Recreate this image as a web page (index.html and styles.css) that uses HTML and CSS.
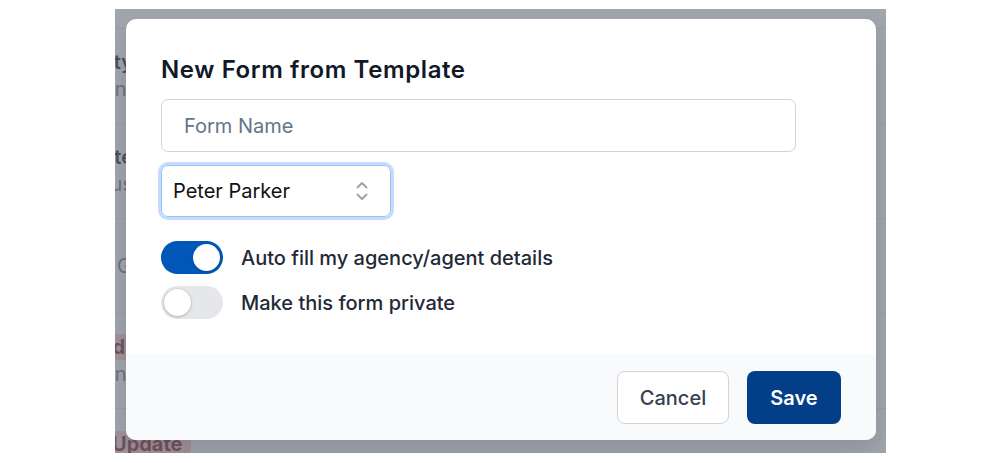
FILE: index.html
```html
<!DOCTYPE html>
<html lang="en">
<head>
<meta charset="utf-8">
<title>New Form from Template</title>
<link rel="stylesheet" href="styles.css">
</head>
<body>
<div class="screen">
  <div class="bg-table">
    <div class="bg-head"></div>
    <div class="bg-row">
      <div class="cell-r"><div class="t-strong">Property</div><div class="t-muted">Agent</div></div>
    </div>
    <div class="bg-row">
      <div class="cell-r"><div class="t-strong">Estate</div><div class="t-muted">Status</div></div>
    </div>
    <div class="bg-row">
      <div class="cell-l"><div class="t-muted">General</div></div>
    </div>
    <div class="bg-row">
      <div class="cell-r"><div><span class="badge">Expired</span></div><div class="t-muted">Agent</div></div>
    </div>
    <div class="bg-row bg-row-last">
      <div class="cell-b"><span class="badge">Update</span></div>
    </div>
  </div>
  <div class="overlay"></div>
  <div class="modal">
    <div class="modal-body">
      <h2 class="title">New Form from Template</h2>
      <div class="input"><span class="placeholder">Form Name</span></div>
      <div class="select">
        <span class="select-value">Peter Parker</span>
        <svg class="chev" width="14" height="22" viewBox="0 0 14 22" aria-hidden="true">
          <polyline points="2.5,7.5 7,3 11.5,7.5" fill="none" stroke="#9ca3af" stroke-width="1.9" stroke-linecap="round" stroke-linejoin="round"/>
          <polyline points="2.5,14.5 7,19 11.5,14.5" fill="none" stroke="#9ca3af" stroke-width="1.9" stroke-linecap="round" stroke-linejoin="round"/>
        </svg>
      </div>
      <div class="toggles">
        <div class="toggle-row">
          <span class="toggle on"><span class="knob"></span></span>
          <span class="toggle-label">Auto fill my agency/agent details</span>
        </div>
        <div class="toggle-row">
          <span class="toggle off"><span class="knob"></span></span>
          <span class="toggle-label">Make this form private</span>
        </div>
      </div>
    </div>
    <div class="modal-footer">
      <button class="btn btn-cancel">Cancel</button>
      <button class="btn btn-save">Save</button>
    </div>
  </div>
</div>
</body>
</html>
```

FILE: styles.css
```css
* { box-sizing: border-box; }
html, body { margin: 0; padding: 0; background: #ffffff; }
body { font-family: Inter, "Noto Sans", "Liberation Sans", sans-serif; }

.screen {
  margin: 9px 0 0 115px;
  width: 771px;
  height: 444px;
  position: relative;
  overflow: hidden;
  background: #ffffff;
}

/* background table (mostly hidden behind the modal) */
.bg-table { display: flex; flex-direction: column; }
.bg-head { height: 20px; border-bottom: 1px solid #e5e7eb; }
.bg-row {
  height: 95px;
  border-bottom: 1px solid #e5e7eb;
  display: flex;
  align-items: center;
  font-size: 20px;
  line-height: 27px;
}
.bg-row-last { align-items: flex-start; padding-top: 22px; border-bottom: 0; }
.cell-r { width: 140px; margin-left: -122px; text-align: right; }
.cell-l { margin-left: 2px; }
.cell-b { margin-left: -11px; }
.t-strong { color: #111827; font-weight: 600; }
.t-muted { color: #6b7280; }
.badge {
  display: inline-block;
  background: #fecaca;
  color: #7f1d1d;
  font-weight: 700;
  padding: 0 8px;
  border-radius: 8px;
  line-height: 26px;
}

.overlay {
  position: absolute;
  inset: 0;
  background: rgba(107, 114, 128, 0.64);
}

.modal {
  position: absolute;
  left: 11px;
  top: 10px;
  width: 750px;
  height: 421px;
  background: #ffffff;
  border-radius: 10px;
  overflow: hidden;
  display: flex;
  flex-direction: column;
  box-shadow: 0 10px 25px rgba(0, 0, 0, 0.12);
}
.modal-body { flex: 1; padding: 36px 35px 0; }
.title {
  margin: 0;
  font-size: 24px;
  line-height: 29px;
  font-weight: 600;
  letter-spacing: 0.6px;
  color: #111827;
}
.input {
  margin-top: 15px;
  width: 635px;
  height: 53px;
  border: 1px solid #d1d5db;
  border-radius: 7px;
  display: flex;
  align-items: center;
  padding-left: 22px;
}
.placeholder { font-size: 20px; color: #64748b; }

.select {
  margin-top: 13px;
  width: 230px;
  height: 52px;
  border: 1px solid #93c5fd;
  border-radius: 7px;
  box-shadow: 0 0 0 3px #c7dcfc;
  display: flex;
  align-items: center;
  justify-content: space-between;
  padding: 0 21px 0 11px;
}
.select-value { font-size: 20px; color: #111111; }
.chev { display: block; }

.toggles { margin-top: 24px; display: flex; flex-direction: column; gap: 12px; }
.toggle-row { display: flex; align-items: center; gap: 18px; }
.toggle {
  width: 62px;
  height: 33px;
  border-radius: 17px;
  padding: 3px;
  display: flex;
  flex-shrink: 0;
}
.toggle.on { background: #0057b7; justify-content: flex-end; }
.toggle.off { background: #e5e7eb; justify-content: flex-start; }
.knob {
  width: 27px;
  height: 27px;
  border-radius: 50%;
  background: #ffffff;
  box-shadow: 0 1px 2px rgba(0, 0, 0, 0.18);
}
.toggle.off .knob { box-shadow: 0 1px 3px rgba(0, 0, 0, 0.22), 0 0 0 0.5px rgba(0,0,0,0.08); }
.toggle-label { font-size: 20px; font-weight: 500; color: #1f2937; }

.modal-footer {
  height: 86px;
  background: #f9fafb;
  display: flex;
  justify-content: flex-end;
  align-items: flex-start;
  gap: 18px;
  padding: 17px 35px 0 0;
}
.btn {
  height: 53px;
  border-radius: 8px;
  font-family: inherit;
  font-size: 20px;
  cursor: pointer;
}
.btn-cancel {
  width: 112px;
  background: #ffffff;
  border: 1px solid #d1d5db;
  color: #374151;
  font-weight: 500;
}
.btn-save {
  width: 94px;
  background: #023f88;
  border: 0;
  color: #ffffff;
  font-weight: 600;
}
```
